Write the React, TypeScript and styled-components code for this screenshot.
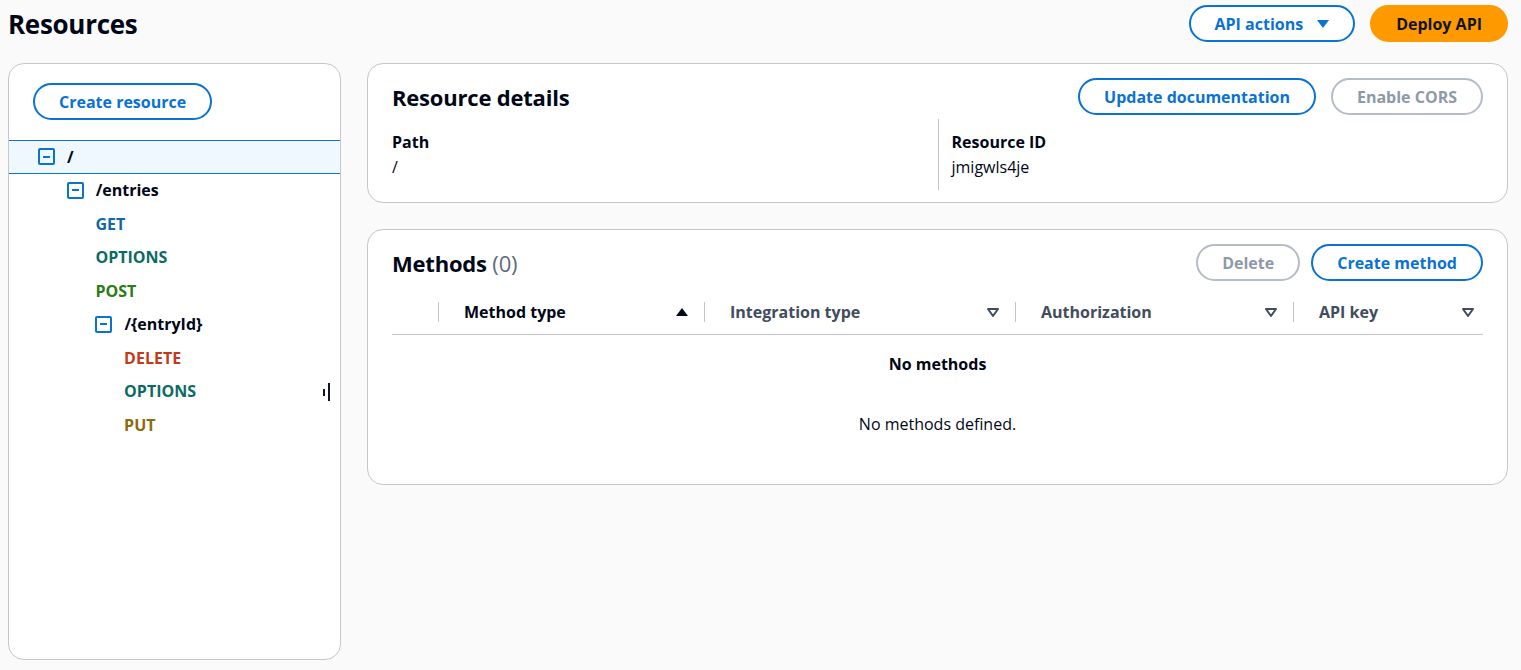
import React from 'react';
import styled, { createGlobalStyle, css } from 'styled-components';

type TreeItem = {
  label: string;
  level: number;
  kind: 'resource' | 'method';
  selected?: boolean;
};

const tree: TreeItem[] = [
  { label: '/', level: 0, kind: 'resource', selected: true },
  { label: '/entries', level: 1, kind: 'resource' },
  { label: 'GET', level: 2, kind: 'method' },
  { label: 'OPTIONS', level: 2, kind: 'method' },
  { label: 'POST', level: 2, kind: 'method' },
  { label: '/{entryId}', level: 2, kind: 'resource' },
  { label: 'DELETE', level: 3, kind: 'method' },
  { label: 'OPTIONS', level: 3, kind: 'method' },
  { label: 'PUT', level: 3, kind: 'method' },
];

const methodColors: Record<string, string> = {
  GET: '#0f69a8',
  OPTIONS: '#0b6b62',
  POST: '#2a7d12',
  DELETE: '#c23a1c',
  PUT: '#8a6c0c',
};

const columns = [
  { title: 'Method type', width: 266, active: true },
  { title: 'Integration type', width: 311 },
  { title: 'Authorization', width: 278 },
  { title: 'API key', width: 189 },
];

const SortIcon = ({ active }: { active?: boolean }) => (
  <svg width="14" height="14" viewBox="0 0 14 14">
    {active ? (
      <path d="M1 11h12L7 3z" fill="#000716" />
    ) : (
      <path d="M2 4h10L7 11z" fill="none" stroke="#414d5c" strokeWidth="2" strokeLinejoin="round" />
    )}
  </svg>
);

const App: React.FC = () => {
  return (
    <>
      <GlobalStyle />
      <Page>
        <TopBar>
          <PageTitle>Resources</PageTitle>
          <Actions>
            <Button>
              API actions
              <Caret viewBox="0 0 12 10">
                <path d="M0 1h12L6 9z" fill="#0972d3" />
              </Caret>
            </Button>
            <Button $variant="primary">Deploy API</Button>
          </Actions>
        </TopBar>

        <Columns>
          <TreePanel>
            <TreeTop>
              <Button>Create resource</Button>
            </TreeTop>
            <Tree>
              {tree.map((item, i) => (
                <TreeRow key={i} $level={item.level} $selected={item.selected}>
                  {item.kind === 'resource' ? (
                    <>
                      <ExpandIcon />
                      <ResourceLabel>{item.label}</ResourceLabel>
                    </>
                  ) : (
                    <MethodLabel $color={methodColors[item.label]}>{item.label}</MethodLabel>
                  )}
                </TreeRow>
              ))}
            </Tree>
            <ResizeHandle>
              <span />
              <span />
            </ResizeHandle>
          </TreePanel>

          <Main>
            <Panel>
              <PanelHeader>
                <PanelTitle>Resource details</PanelTitle>
                <Actions>
                  <Button>Update documentation</Button>
                  <Button $variant="disabled">Enable CORS</Button>
                </Actions>
              </PanelHeader>
              <KeyValues>
                <KeyValue>
                  <Key>Path</Key>
                  <Value>/</Value>
                </KeyValue>
                <KeyValue $divider>
                  <Key>Resource ID</Key>
                  <Value>jmigwls4je</Value>
                </KeyValue>
              </KeyValues>
            </Panel>

            <Panel>
              <PanelHeader>
                <PanelTitle>
                  Methods <Counter>(0)</Counter>
                </PanelTitle>
                <Actions $gap={11}>
                  <Button $variant="disabled">Delete</Button>
                  <Button>Create method</Button>
                </Actions>
              </PanelHeader>
              <Table>
                <HeaderRow>
                  <SelectCell />
                  {columns.map((col) => (
                    <HeaderCell key={col.title} style={{ width: col.width }}>
                      <HeaderText $active={col.active}>{col.title}</HeaderText>
                      <SortIcon active={col.active} />
                    </HeaderCell>
                  ))}
                </HeaderRow>
                <Empty>
                  <EmptyTitle>No methods</EmptyTitle>
                  <EmptyText>No methods defined.</EmptyText>
                </Empty>
              </Table>
            </Panel>
          </Main>
        </Columns>
      </Page>
    </>
  );
};

export default App;

const GlobalStyle = createGlobalStyle`
  body {
    margin: 0;
    background: #fafafa;
    font-family: "Open Sans", "Noto Sans", Arial, sans-serif;
    color: #000716;
  }
`;

const Page = styled.div`
  padding: 0 13px 0 8px;
  width: 1521px;
  box-sizing: border-box;
`;

const TopBar = styled.div`
  display: flex;
  justify-content: space-between;
  align-items: center;
  height: 47px;
  padding-bottom: 16px;
`;

const PageTitle = styled.h1`
  margin: 0;
  font-size: 26px;
  font-weight: 700;
  line-height: 36px;
  letter-spacing: -0.3px;
`;

const Actions = styled.div<{ $gap?: number }>`
  display: flex;
  gap: ${(p) => p.$gap ?? 15}px;
  align-items: center;
`;

const Button = styled.button<{ $variant?: 'normal' | 'primary' | 'disabled' }>`
  display: inline-flex;
  align-items: center;
  gap: 14px;
  height: 37px;
  padding: 0 24px;
  border-radius: 20px;
  border: 2px solid #0972d3;
  background: #ffffff;
  color: #0972d3;
  font-family: inherit;
  font-size: 16px;
  font-weight: 700;
  cursor: pointer;
  ${(p) =>
    p.$variant === 'primary' &&
    css`
      background: #ff9900;
      border-color: #ff9900;
      color: #0f141a;
    `}
  ${(p) =>
    p.$variant === 'disabled' &&
    css`
      border-color: #b4bcc6;
      color: #8d99a8;
      cursor: default;
    `}
`;

const Caret = styled.svg`
  width: 12px;
  height: 10px;
`;

const Columns = styled.div`
  display: flex;
  gap: 26px;
  align-items: flex-start;
`;

const PanelBase = css`
  background: #ffffff;
  border: 1px solid #c6c6cd;
  border-radius: 16px;
  box-sizing: border-box;
`;

const TreePanel = styled.div`
  ${PanelBase};
  position: relative;
  width: 334px;
  height: 597px;
  padding-top: 19px;
`;

const TreeTop = styled.div`
  padding-left: 24px;
`;

const Tree = styled.div`
  margin-top: 20px;
`;

const TreeRow = styled.div<{ $level: number; $selected?: boolean }>`
  display: flex;
  align-items: center;
  gap: 12px;
  height: 33.5px;
  box-sizing: border-box;
  padding-left: ${(p) => 29 + p.$level * 28.7}px;
  border-top: 1px solid ${(p) => (p.$selected ? '#0972d3' : 'transparent')};
  border-bottom: 1px solid ${(p) => (p.$selected ? '#0972d3' : 'transparent')};
  background: ${(p) => (p.$selected ? '#f0f8ff' : 'transparent')};
`;

const ExpandIcon = styled.span`
  display: inline-flex;
  align-items: center;
  justify-content: center;
  width: 17px;
  height: 17px;
  box-sizing: border-box;
  border: 2px solid #0972d3;
  border-radius: 2px;
  &::after {
    content: '';
    width: 7px;
    height: 2px;
    background: #0972d3;
  }
`;

const ResourceLabel = styled.span`
  font-size: 16px;
  font-weight: 700;
  color: #000716;
`;

const MethodLabel = styled.span<{ $color: string }>`
  font-size: 16px;
  font-weight: 700;
  color: ${(p) => p.$color};
`;

const ResizeHandle = styled.div`
  position: absolute;
  left: 314px;
  top: 319px;
  display: flex;
  align-items: center;
  gap: 3px;
  span {
    display: block;
    width: 2px;
    height: 7px;
    background: #0f141a;
  }
  span + span {
    height: 18px;
  }
`;

const Main = styled.div`
  flex: 1;
  display: flex;
  flex-direction: column;
  gap: 26px;
`;

const Panel = styled.div`
  ${PanelBase};
  padding: 14px 24px 12px;
`;

const PanelHeader = styled.div`
  display: flex;
  justify-content: space-between;
  align-items: center;
`;

const PanelTitle = styled.h2`
  margin: 0;
  font-size: 22px;
  font-weight: 700;
  line-height: 28px;
  letter-spacing: -0.2px;
`;

const Counter = styled.span`
  font-weight: 400;
  color: #5f6b7a;
`;

const KeyValues = styled.div`
  display: grid;
  grid-template-columns: 1fr 1fr;
  margin-top: 4px;
`;

const KeyValue = styled.div<{ $divider?: boolean }>`
  padding: 12px 0;
  ${(p) =>
    p.$divider &&
    css`
      border-left: 1px solid #c6c6cd;
      padding-left: 13px;
    `}
`;

const Key = styled.div`
  font-size: 16px;
  font-weight: 700;
  line-height: 22px;
  margin-bottom: 3px;
`;

const Value = styled.div`
  font-size: 16px;
  line-height: 22px;
`;

const Table = styled.div`
  margin-top: 9px;
`;

const HeaderRow = styled.div`
  display: flex;
  align-items: center;
  height: 44px;
  border-bottom: 1px solid #c6c6cd;
`;

const SelectCell = styled.div`
  width: 46px;
  height: 20px;
  border-right: 1px solid #c6c6cd;
`;

const HeaderCell = styled.div`
  display: flex;
  align-items: center;
  justify-content: space-between;
  height: 20px;
  padding: 0 15px 0 25px;
  box-sizing: border-box;
  border-right: 1px solid #c6c6cd;
  &:last-child {
    border-right: none;
    padding-right: 8px;
  }
`;

const HeaderText = styled.span<{ $active?: boolean }>`
  font-size: 16px;
  font-weight: 700;
  color: ${(p) => (p.$active ? '#000716' : '#414d5c')};
`;

const Empty = styled.div`
  display: flex;
  flex-direction: column;
  align-items: center;
  padding: 18px 0 37px;
  gap: 38px;
`;

const EmptyTitle = styled.div`
  font-size: 16px;
  font-weight: 700;
  line-height: 22px;
`;

const EmptyText = styled.div`
  font-size: 16px;
  line-height: 22px;
`;
